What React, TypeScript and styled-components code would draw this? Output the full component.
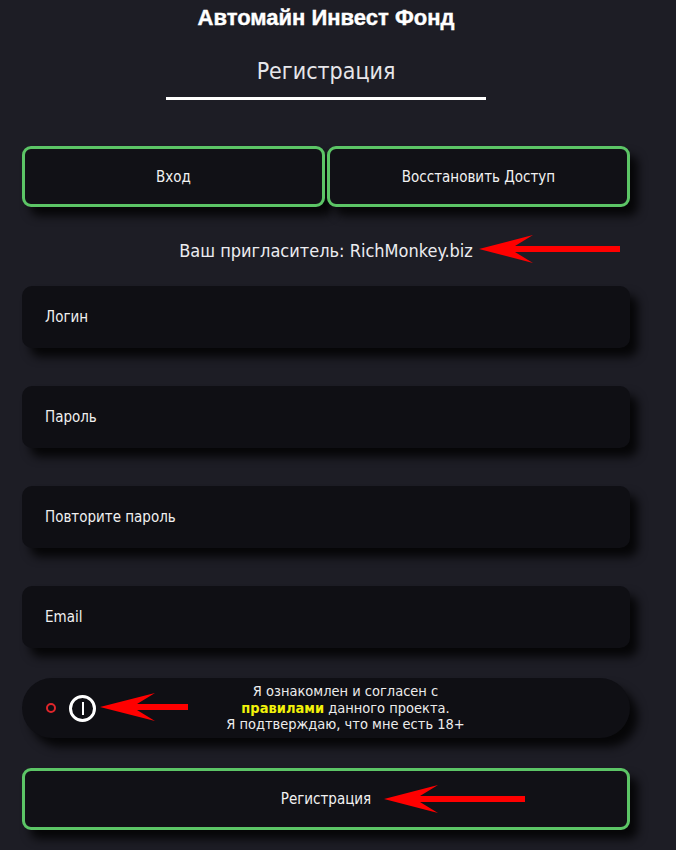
import React from "react";
import styled, { createGlobalStyle } from "styled-components";

const Global = createGlobalStyle`
  html, body { margin: 0; padding: 0; background: #1d1d25; }
  body { font-family: "DejaVu Sans", "Liberation Sans", sans-serif; color: #ececec; }
  * { box-sizing: border-box; }
`;

const Page = styled.div`
  position: relative;
  width: 676px;
  height: 850px;
  background: #1d1d25;
  padding: 0 46px 0 22px;
  overflow: hidden;
`;

const SiteName = styled.h1`
  margin: 0;
  padding-top: 6px;
  height: 34px;
  font-family: "Liberation Sans", Arial, sans-serif;
  font-weight: 700;
  font-size: 22px;
  line-height: 24px;
  text-align: center;
  color: #ffffff;
  -webkit-text-stroke: 0.4px #ffffff;
`;

const Title = styled.h2`
  margin: 0;
  padding-top: 23px;
  height: 63px;
  font-family: "DejaVu Sans", sans-serif;
  font-stretch: condensed;
  font-weight: 400;
  font-size: 23px;
  line-height: 28px;
  text-align: center;
  color: #e6e6ea;
`;

const Underline = styled.div`
  width: 320px;
  height: 3px;
  margin: 0 auto;
  background: #ffffff;
`;

const TabRow = styled.div`
  display: flex;
  gap: 2px;
  margin-top: 46px;
`;

const GreenButton = styled.div`
  flex: 1;
  height: 61px;
  display: flex;
  align-items: center;
  justify-content: center;
  background: #111116;
  border: 3px solid #5cc566;
  border-radius: 9px;
  box-shadow: 8px 9px 10px rgba(0, 0, 0, 0.8);
  font-stretch: condensed;
  font-size: 15px;
  color: #f2f2f2;
`;

const Invite = styled.div`
  height: 79px;
  display: flex;
  align-items: center;
  justify-content: center;
  padding-top: 8px;
  font-stretch: condensed;
  font-size: 18px;
  color: #ececf0;
`;

const Fields = styled.div`
  display: flex;
  flex-direction: column;
  gap: 38px;
`;

const Field = styled.div`
  height: 62px;
  display: flex;
  align-items: center;
  padding-left: 23px;
  background: #0f0f14;
  border-radius: 10px;
  box-shadow: 8px 9px 10px rgba(0, 0, 0, 0.8);
  font-stretch: condensed;
  font-size: 15px;
  color: #f0f0f0;
`;

const Agree = styled.div`
  margin-top: 30px;
  height: 60px;
  display: flex;
  align-items: center;
  padding: 0 35px 0 24px;
  background: #0f0f14;
  border-radius: 30px;
  box-shadow: 8px 9px 10px rgba(0, 0, 0, 0.8);
`;

const RedDot = styled.span`
  width: 10px;
  height: 10px;
  border: 2px solid #e0262b;
  border-radius: 50%;
  flex: none;
`;

const Ring = styled.span`
  margin-left: 13px;
  width: 27px;
  height: 27px;
  border: 3.5px solid #ffffff;
  border-radius: 50%;
  flex: none;
  display: flex;
  align-items: center;
  justify-content: center;
  &::after {
    content: "";
    width: 2px;
    height: 13px;
    background: #ffffff;
  }
`;

const AgreeText = styled.div`
  flex: 1;
  text-align: center;
  font-stretch: condensed;
  font-size: 14.5px;
  line-height: 16.5px;
  color: #ececec;
`;

const Rules = styled.span`
  color: #f2f20a;
  font-weight: 700;
`;

const Submit = styled(GreenButton)`
  margin-top: 30px;
  height: 62px;
`;

const Arrow = styled.svg<{ $x: number; $y: number }>`
  position: absolute;
  left: ${(p) => p.$x}px;
  top: ${(p) => p.$y}px;
  overflow: visible;
`;

function RedArrow({ x, y, len, head = 54, half = 14 }: { x: number; y: number; len: number; head?: number; half?: number }) {
  return (
    <Arrow $x={x} $y={y - half} width={len} height={half * 2}>
      <path
        d={`M0 ${half} L${head} 0 L${head - 18} ${half - 3} L${len} ${half - 3} L${len} ${half + 3} L${head - 18} ${half + 3} L${head} ${half * 2} Z`}
        fill="#ff0000"
      />
    </Arrow>
  );
}

export default function App() {
  return (
    <>
      <Global />
      <Page>
        <SiteName>Автомайн Инвест Фонд</SiteName>
        <Title>Регистрация</Title>
        <Underline />
        <TabRow>
          <GreenButton>Вход</GreenButton>
          <GreenButton>Восстановить Доступ</GreenButton>
        </TabRow>
        <Invite>Ваш пригласитель: RichMonkey.biz</Invite>
        <Fields>
          <Field>Логин</Field>
          <Field>Пароль</Field>
          <Field>Повторите пароль</Field>
          <Field>Email</Field>
        </Fields>
        <Agree>
          <RedDot />
          <Ring />
          <AgreeText>
            Я ознакомлен и согласен с<br />
            <Rules>правилами</Rules> данного проекта.<br />
            Я подтверждаю, что мне есть 18+
          </AgreeText>
        </Agree>
        <Submit>Регистрация</Submit>
        <RedArrow x={479} y={249} len={141} head={54} half={14} />
        <RedArrow x={100} y={707} len={88} head={55} half={14} />
        <RedArrow x={384} y={799} len={141} head={54} half={14} />
      </Page>
    </>
  );
}
